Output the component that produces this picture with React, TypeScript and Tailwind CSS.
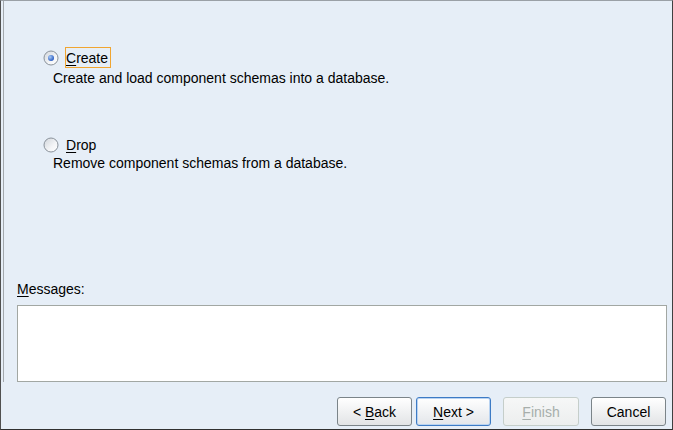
import React from "react";

function Radio({ checked, id }: { checked?: boolean; id: string }) {
  return (
    <svg width="16" height="16" viewBox="0 0 16 16" className="shrink-0">
      <defs>
        <linearGradient id={`rg-${id}`} x1="0" y1="0" x2="1" y2="1">
          <stop offset="0" stopColor="#cfd4da" />
          <stop offset="0.6" stopColor="#f4f5f7" />
          <stop offset="1" stopColor="#ffffff" />
        </linearGradient>
        <radialGradient id={`dot-${id}`} cx="0.35" cy="0.35" r="0.7">
          <stop offset="0" stopColor="#a9cbf5" />
          <stop offset="1" stopColor="#2558c0" />
        </radialGradient>
      </defs>
      <circle cx="8" cy="8" r="7" fill={`url(#rg-${id})`} stroke="#8a929b" strokeWidth="1" />
      {checked && <circle cx="8" cy="8" r="3" fill={`url(#dot-${id})`} />}
    </svg>
  );
}

function Btn({ children, variant }: { children: React.ReactNode; variant?: "default" | "focus" | "disabled" }) {
  const base =
    "h-[29px] rounded-[3px] border flex items-center justify-center text-[14px] leading-[16px]";
  const v =
    variant === "focus"
      ? "border-[#3d7bc5] bg-gradient-to-b from-[#ffffff] to-[#e3e6ea] text-[#000000] shadow-[inset_0_0_0_1px_#b9d3f1]"
      : variant === "disabled"
      ? "border-[#c5ceca] bg-gradient-to-b from-[#f6f7f7] to-[#eceeee] text-[#a7aeab]"
      : "border-[#7b8489] bg-gradient-to-b from-[#ffffff] to-[#e2e4e6] text-[#000000]";
  return <div className={`${base} ${v}`}>{children}</div>;
}

export default function App() {
  return (
    <div
      className="w-[673px] h-[430px] bg-[#e6eef7] border-t border-t-[#9aa0a6] border-l border-l-[#505050] border-r border-r-[#404040] border-b border-b-[#303030] flex flex-col text-[#000000]"
      style={{ fontFamily: '"Liberation Sans", Arial, sans-serif' }}
    >
      <div className="ml-[2px] h-[381px] border-l border-l-[#a3a8ad] flex flex-col">
        <div className="pl-[39px] pt-[46px] flex flex-col">
          <div className="flex items-center h-[21px]">
            <Radio checked id="a" />
            <div className="ml-[6px] h-[21px] border border-[#f0a531] pl-[0px] pr-[2px] flex items-center text-[14px] leading-[16px]">
              <span><u className="underline-offset-2">C</u>reate</span>
            </div>
          </div>
          <div className="mt-[2px] ml-[10px] text-[14px] leading-[16px]">
            Create and load component schemas into a database.
          </div>
          <div className="mt-[50px] flex items-center h-[18px]">
            <Radio id="b" />
            <div className="ml-[7px] text-[14px] leading-[16px]">
              <u className="underline-offset-2">D</u>rop
            </div>
          </div>
          <div className="mt-[1px] ml-[10px] text-[14px] leading-[16px]">
            Remove component schemas from a database.
          </div>
        </div>
        <div className="mt-[110px] pl-[13px] text-[14px] leading-[16px]">
          <u className="underline-offset-2">M</u>essages:
        </div>
        <div className="mt-[8px] ml-[13px] w-[650px] h-[77px] bg-white border border-[#a2a7a3]" />
      </div>
      <div className="flex justify-end pr-[6px] pt-[15px]">
        <div className="w-[75px]">
          <Btn>
            <span>&lt; <u className="underline-offset-2">B</u>ack</span>
          </Btn>
        </div>
        <div className="w-[75px] ml-[4px]">
          <Btn variant="focus">
            <span><u className="underline-offset-2">N</u>ext &gt;</span>
          </Btn>
        </div>
        <div className="w-[76px] ml-[12px]">
          <Btn variant="disabled">
            <span><u className="underline-offset-2">F</u>inish</span>
          </Btn>
        </div>
        <div className="w-[75px] ml-[12px]">
          <Btn>
            <span>Cancel</span>
          </Btn>
        </div>
      </div>
    </div>
  );
}
